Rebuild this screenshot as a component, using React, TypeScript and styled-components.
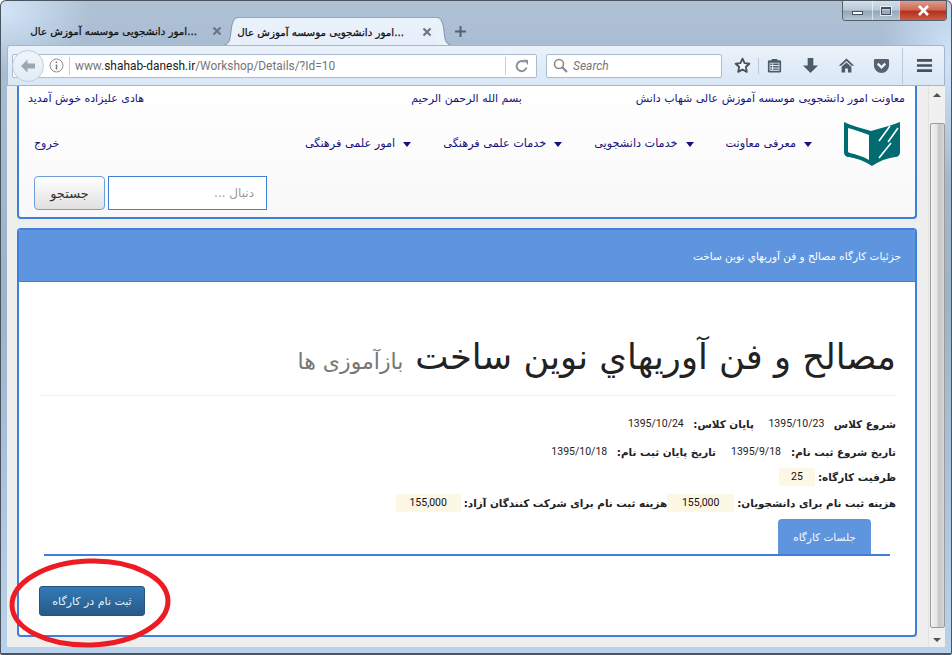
import React from "react";
import styled, { createGlobalStyle } from "styled-components";

const persian = `"DejaVu Sans", "Noto Sans", sans-serif`;
const latin = `Roboto, "Open Sans", "Liberation Sans", sans-serif`;
const blue = "#3f7fd8";
const navy = "#15127c";

const GlobalStyle = createGlobalStyle`
  html, body { margin: 0; padding: 0; width: 952px; height: 655px; overflow: hidden; }
  * { box-sizing: border-box; }
`;

const Frame = styled.div`
  position: relative;
  width: 952px;
  height: 655px;
  display: flex;
  flex-direction: column;
  padding: 0 6px 6px;
  border: 1px solid #4a5562;
  border-radius: 6px 6px 2px 2px;
  border-width: 1px 1px 2px 1px;
  overflow: hidden;
  background:
    radial-gradient(ellipse 90px 60px at 0 10px, #d3e6f8 0%, rgba(211, 230, 248, 0) 100%),
    radial-gradient(ellipse 70px 120px at 100% 60px, #cfe4f8 0%, rgba(207, 228, 248, 0) 100%),
    linear-gradient(180deg, #b0c1d4 0, #a9bdd3 45px, #9db3ca 300px, #b9d2ea 648px);
`;

const WindowControls = styled.div`
  position: absolute;
  top: 0;
  right: 4px;
  display: flex;
  height: 20px;
  border: 1px solid #55606c;
  border-top: none;
  border-radius: 0 0 4px 4px;
  overflow: hidden;
`;

const ControlButton = styled.div<{ $width: number; $close?: boolean }>`
  width: ${(p) => p.$width}px;
  display: flex;
  align-items: center;
  justify-content: center;
  border-left: 1px solid rgba(255, 255, 255, 0.6);
  background: ${(p) =>
    p.$close
      ? "linear-gradient(180deg, #dc9c8e 0, #cf6a56 45%, #b7301c 55%, #cc5c44 100%)"
      : "linear-gradient(180deg, #d5e0ea 0, #b9c9d9 45%, #93a7ba 55%, #b3c5d6 100%)"};
  &:first-child { border-left: none; }
`;

const MinimizeGlyph = styled.span`
  width: 11px;
  height: 4px;
  margin-top: 4px;
  background: #fff;
  border: 1px solid #44505c;
`;

const MaximizeGlyph = styled.span`
  width: 10px;
  height: 8px;
  border: 1px solid #44505c;
  border-top-width: 2px;
  outline: 1px solid rgba(255, 255, 255, 0.7);
`;

const TabStrip = styled.div`
  height: 44px;
  flex: none;
  display: flex;
  align-items: flex-end;
  padding-left: 17px;
`;

const InactiveTab = styled.div`
  width: 203px;
  height: 28px;
  display: flex;
  align-items: center;
  padding: 0 5px 0 7px;
  gap: 15px;
`;

const ActiveTabBody = styled.div`
  height: 28px;
  width: 199px;
  display: flex;
  align-items: center;
  padding-left: 3px;
  gap: 18px;
  border-top: 1px solid #93a6ba;
  background: linear-gradient(180deg, #eaf2fb, #e6effa);
`;

const ActiveTab = styled.div`
  display: flex;
  align-items: flex-end;
  margin-left: -3px;
`;

const TabCurve = styled.svg<{ $flip?: boolean }>`
  display: block;
  width: 14px;
  height: 28px;
  flex: none;
  ${(p) => p.$flip && "transform: scaleX(-1);"}
`;

const TabTitle = styled.span<{ $width: number }>`
  width: ${(p) => p.$width}px;
  flex: none;
  font: 10.3px/14px ${persian};
  color: #111;
  direction: rtl;
  white-space: nowrap;
  -webkit-text-stroke: 0.25px #111;
`;

const TabClose = styled.svg`
  width: 10px;
  height: 10px;
  flex: none;
`;

const NewTab = styled.svg`
  width: 11px;
  height: 11px;
  margin: 0 0 8px 4px;
`;

const Toolbar = styled.div`
  height: 41px;
  flex: none;
  display: flex;
  align-items: center;
  padding-left: 4px;
  border: 1px solid #a3b6ca;
  border-radius: 3px 3px 0 0;
  background: linear-gradient(180deg, #ebf2fa, #d9e7f6);
`;

const UrlBar = styled.div`
  width: 525px;
  height: 24px;
  flex: none;
  display: flex;
  align-items: center;
  background: #fff;
  border: 1px solid #a9bcd2;
  border-radius: 2px;
`;

const BackButton = styled.div`
  width: 32px;
  height: 32px;
  margin-left: -1px;
  flex: none;
  border-radius: 50%;
  display: flex;
  align-items: center;
  justify-content: center;
  background: linear-gradient(180deg, #f0f5fb, #e2ebf5);
  border: 1px solid #c3d0de;
`;

const UrlIcon = styled.svg`
  width: 15px;
  height: 15px;
  margin-left: 5px;
  flex: none;
`;

const UrlDivider = styled.span`
  width: 1px;
  height: 18px;
  margin-left: 5px;
  background: #c9ced4;
  flex: none;
`;

const UrlText = styled.span`
  margin-left: 5px;
  font: 11.9px/20px ${latin};
  color: #757575;
  white-space: nowrap;
  flex: 1;
`;

const UrlHost = styled.span`
  color: #1b1b1b;
`;

const ReloadIcon = styled.svg`
  width: 14px;
  height: 14px;
  margin: 0 7px 0 9px;
  flex: none;
`;

const SearchBox = styled.div`
  width: 176px;
  height: 24px;
  margin: 0 5px 0 9px;
  flex: none;
  display: flex;
  align-items: center;
  gap: 5px;
  padding-left: 6px;
  background: #fff;
  border: 1px solid #a9bcd2;
  border-radius: 2px;
  font: italic 12px/16px ${latin};
  color: #777;
`;

const ToolSlot = styled.div<{ $width: number }>`
  width: ${(p) => p.$width}px;
  flex: none;
  display: flex;
  align-items: center;
  justify-content: center;
`;

const ToolSeparator = styled.span<{ $tall?: boolean }>`
  width: 1px;
  height: ${(p) => (p.$tall ? 36 : 16)}px;
  flex: none;
  background: #bccbdb;
`;

const ToolIcon = styled.svg`
  width: 17px;
  height: 17px;
  display: block;
`;

const Content = styled.div`
  flex: 1;
  min-height: 0;
  display: flex;
`;

const Page = styled.main`
  flex: 1;
  min-width: 0;
  background: #eee;
  padding: 0 11px 0 10px;
  direction: rtl;
  font: 11px/16px ${persian};
`;

const Scrollbar = styled.div`
  width: 17px;
  flex: none;
  display: flex;
  flex-direction: column;
  align-items: center;
  background: #f0f0f0;
  border-left: 1px solid #e2e2e2;
`;

const ScrollArrow = styled.div<{ $down?: boolean }>`
  height: ${(p) => (p.$down ? 19 : 37)}px;
  flex: none;
  width: 100%;
  display: flex;
  align-items: ${(p) => (p.$down ? "flex-end" : "flex-start")};
  justify-content: center;
  padding: ${(p) => (p.$down ? "0 0 5px" : "7px 0 0")};
  &::before {
    content: "";
    border-left: 4px solid transparent;
    border-right: 4px solid transparent;
    ${(p) => (p.$down ? "border-top: 4px solid #505050;" : "border-bottom: 4px solid #505050;")}
  }
`;

const ScrollThumb = styled.div`
  flex: 1;
  width: 15px;
  border: 1px solid #9a9a9a;
  border-radius: 2px;
  background: linear-gradient(90deg, #f2f2f2 0, #e4e4e4 45%, #c6c6c6 60%, #d6d6d6 100%);
`;

const HeaderCard = styled.header`
  height: 133px;
  display: flex;
  flex-direction: column;
  padding: 5px 0 0;
  border: 2px solid ${blue};
  border-top: none;
  border-radius: 0 0 4px 4px;
  background: linear-gradient(180deg, #fff 0, #f8f8f8 100%);
  color: ${navy};
`;

const TopLine = styled.div`
  display: grid;
  grid-template-columns: 1fr auto 1fr;
  padding: 0 10px 0 9px;
  height: 16px;
`;

const LeftCell = styled.div`
  text-align: left;
`;

const NavRow = styled.nav`
  display: flex;
  align-items: center;
  gap: 32px;
  height: 44px;
  margin-top: 15px;
  padding: 0 15px 0 15px;
`;

const Logo = styled.svg`
  width: 56px;
  height: 44px;
  flex: none;
`;

const NavItem = styled.a`
  display: flex;
  align-items: center;
  gap: 8px;
  font-size: 11.25px;
  white-space: nowrap;
  &::before {
    content: "";
    border-left: 4px solid transparent;
    border-right: 4px solid transparent;
    border-top: 5px solid ${navy};
  }
`;

const ExitLink = styled.a`
  margin-right: auto;
`;

const SearchRow = styled.form`
  display: flex;
  justify-content: flex-end;
  gap: 3px;
  margin-top: 10px;
  padding-left: 15px;
`;

const SearchInput = styled.div`
  width: 159px;
  height: 34px;
  display: flex;
  align-items: center;
  padding: 0 12px;
  border: 1px solid ${blue};
  background: #fff;
  color: #999;
  font-size: 12px;
`;

const SearchButton = styled.button`
  width: 71px;
  height: 34px;
  border: 1px solid #6f9fd8;
  border-radius: 4px;
  background: linear-gradient(180deg, #fff 0, #e0e0e0 100%);
  color: #333;
  font: 13px ${persian};
  padding: 0;
`;

const Panel = styled.section`
  height: 409px;
  margin-top: 9px;
  border: 2px solid ${blue};
  border-radius: 4px;
  background: #fff;
  overflow: hidden;
`;

const PanelHeading = styled.div`
  height: 52px;
  display: flex;
  align-items: center;
  padding-right: 14px;
  background: #5f95de;
  color: #fff;
  font-size: 10.5px;
  border-bottom: 1px solid ${blue};
`;

const PanelBody = styled.div`
  padding: 0 19px 0 20px;
`;

const PageTitle = styled.h1`
  margin: 45px 0 14px;
  height: 69px;
  display: flex;
  align-items: baseline;
  gap: 12px;
  padding: 7px 0 0;
  border-bottom: 1px solid #eee;
  font: 400 35.3px/46px ${persian};
  color: #222;
  white-space: nowrap;
`;

const TitleNote = styled.small`
  font-size: 22px;
  font-weight: 400;
  color: #777;
`;

const InfoList = styled.dl`
  margin: 0;
`;

const InfoRow = styled.div<{ $height: number }>`
  height: ${(p) => p.$height}px;
  display: flex;
  align-items: center;
  color: #222;
`;

const InfoLabel = styled.dt`
  font-weight: 700;
  font-size: 10.4px;
  white-space: nowrap;
`;

const InfoValue = styled.dd<{ $width: number; $marked?: boolean }>`
  width: ${(p) => p.$width}px;
  height: 18px;
  margin: 0 10px 0 15px;
  flex: none;
  display: flex;
  align-items: center;
  justify-content: center;
  font: 10.5px/18px ${latin};
  color: #222;
  direction: ltr;
  ${(p) => p.$marked && "background: #fdf7e6; margin: 0 3px 0 0; color: #111;"}
`;

const TabBar = styled.div`
  margin: 1px 6px 0 5px;
  height: 37px;
  border-bottom: 2px solid ${blue};
  padding-right: 19px;
  display: flex;
`;

const SessionTab = styled.div`
  width: 93px;
  height: 35px;
  display: flex;
  align-items: center;
  justify-content: center;
  background: #5f95de;
  border-radius: 4px 4px 0 0;
  color: #f4f8ff;
  font-size: 10.5px;
`;

const RegisterRow = styled.div`
  display: flex;
  justify-content: flex-end;
  margin-top: 30px;
`;

const RegisterButton = styled.button`
  width: 106px;
  height: 30px;
  padding: 0;
  border: 1px solid #245580;
  border-radius: 3px;
  background: linear-gradient(180deg, #337ab7 0, #265a88 100%);
  color: #e8f2fb;
  font: 11px ${persian};
`;

const Highlight = styled.svg`
  position: absolute;
  left: -1px;
  top: -1px;
  width: 952px;
  height: 655px;
  pointer-events: none;
`;

function CloseGlyph() {
  return (
    <TabClose viewBox="0 0 10 10">
      <path d="M1.5 1.5l7 7M8.5 1.5l-7 7" stroke="#6d7580" strokeWidth="2.2" />
    </TabClose>
  );
}

function Curve({ flip }: { flip?: boolean }) {
  return (
    <TabCurve viewBox="0 0 14 28" $flip={flip}>
      <path d="M0 28C6 27 6 22 7 14C8 5 10 1 14 .5V28Z" fill="#e9f1fa" />
      <path d="M0 28C6 27 6 22 7 14C8 5 10 1 14 .5" fill="none" stroke="#7f93a8" />
    </TabCurve>
  );
}

export default function App() {
  const tabTitle = "...امور دانشجویی موسسه آموزش عال";
  return (
    <>
      <GlobalStyle />
      <Frame>
        <WindowControls>
          <ControlButton $width={29}>
            <MinimizeGlyph />
          </ControlButton>
          <ControlButton $width={27}>
            <MaximizeGlyph />
          </ControlButton>
          <ControlButton $width={47} $close>
            <svg width="13" height="11" viewBox="0 0 13 11">
              <path d="M2 1l9 9M11 1l-9 9" stroke="#fff" strokeWidth="2.6" />
            </svg>
          </ControlButton>
        </WindowControls>

        <TabStrip>
          <InactiveTab>
            <TabTitle $width={166}>{tabTitle}</TabTitle>
            <CloseGlyph />
          </InactiveTab>
          <ActiveTab>
            <Curve />
            <ActiveTabBody>
              <TabTitle $width={163}>{tabTitle}</TabTitle>
              <CloseGlyph />
            </ActiveTabBody>
            <Curve flip />
          </ActiveTab>
          <NewTab viewBox="0 0 11 11">
            <path d="M5.5 0v11M0 5.5h11" stroke="#55626f" strokeWidth="2" />
          </NewTab>
        </TabStrip>

        <Toolbar>
          <UrlBar>
            <BackButton>
              <svg width="16" height="14" viewBox="0 0 16 14">
                <path d="M7.5 0.5L1 7l6.5 6.5V9.5H15v-5H7.5z" fill="#9aa6b2" />
              </svg>
            </BackButton>
            <UrlIcon viewBox="0 0 15 15">
              <circle cx="7.5" cy="7.5" r="6.5" fill="none" stroke="#8d8d8d" />
              <path d="M7.5 3.5v1.6M7.5 6.5V11.5" stroke="#777" strokeWidth="1.5" />
            </UrlIcon>
            <UrlDivider />
            <UrlText>
              www.<UrlHost>shahab-danesh.ir</UrlHost>/Workshop/Details/?Id=10
            </UrlText>
            <UrlDivider />
            <ReloadIcon viewBox="0 0 14 14">
              <path d="M11.5 8.5A5 5 0 1 1 9.5 3" fill="none" stroke="#8a949e" strokeWidth="2" />
              <path d="M8 0.5L13 1v5z" fill="#8a949e" />
            </ReloadIcon>
          </UrlBar>
          <SearchBox>
            <svg width="15" height="15" viewBox="0 0 15 15">
              <circle cx="6" cy="6" r="4.5" fill="none" stroke="#8a8a8a" strokeWidth="1.6" />
              <path d="M9.5 9.5L14 14" stroke="#8a8a8a" strokeWidth="2.2" />
            </svg>
            Search
          </SearchBox>
          <ToolSlot $width={31}>
            <ToolIcon viewBox="0 0 18 18">
              <path d="M9 1.8l2.2 4.7 5 .6-3.7 3.5 1 5.1L9 13.2l-4.5 2.5 1-5.1L1.8 7.1l5-.6z" fill="#f7fafd" stroke="#46535f" strokeWidth="2" strokeLinejoin="round" />
            </ToolIcon>
          </ToolSlot>
          <ToolSeparator />
          <ToolSlot $width={30}>
            <ToolIcon viewBox="0 0 18 18">
              <path d="M6 3.5V2h6v1.5h2.5a1.5 1.5 0 0 1 1.5 1.5v10a1.5 1.5 0 0 1-1.5 1.5h-11A1.5 1.5 0 0 1 2 15V5a1.5 1.5 0 0 1 1.5-1.5z" fill="#4d5b68" />
              <path d="M3.8 6h10.4v8.6H3.8z" fill="#e6eff8" />
              <path d="M4.5 7.7h9M4.5 10.3h9M4.5 12.9h9" stroke="#4d5b68" strokeWidth="1.4" />
              <path d="M7 6.5v7.5" stroke="#e6eff8" strokeWidth="1" />
            </ToolIcon>
          </ToolSlot>
          <ToolSlot $width={42}>
            <ToolIcon viewBox="0 0 18 18">
              <path d="M6 1h6v8h5l-8 8-8-8h5z" fill="#4d5b68" />
            </ToolIcon>
          </ToolSlot>
          <ToolSlot $width={30}>
            <ToolIcon viewBox="0 0 18 18">
              <path d="M9 1.5L.8 9.2h2.7L9 4.2l5.5 5h2.7z" fill="#4d5b68" />
              <path d="M9 5.8L3.8 10.4v6.1h3.7v-4.3h3v4.3h3.7v-6.1z" fill="#4d5b68" />
            </ToolIcon>
          </ToolSlot>
          <ToolSlot $width={41}>
            <ToolIcon viewBox="0 0 18 18">
              <path d="M2.5 2h13A1.5 1.5 0 0 1 17 3.5V9a8 8 0 0 1-16 0V3.5A1.5 1.5 0 0 1 2.5 2z" fill="#56636f" />
              <path d="M5 7l4 4 4-4" fill="none" stroke="#eef4fa" strokeWidth="2.4" />
            </ToolIcon>
          </ToolSlot>
          <ToolSeparator $tall />
          <ToolSlot $width={42}>
            <ToolIcon viewBox="0 0 18 18">
              <path d="M1 3.5h16M1 9h16M1 14.5h16" stroke="#45525e" strokeWidth="2.8" />
            </ToolIcon>
          </ToolSlot>
        </Toolbar>

        <Content>
          <Page>
            <HeaderCard>
              <TopLine>
                <div>معاونت امور دانشجویی موسسه آموزش عالی شهاب دانش</div>
                <div>بسم الله الرحمن الرحیم</div>
                <LeftCell>هادی علیزاده خوش آمدید</LeftCell>
              </TopLine>
              <NavRow>
                <Logo viewBox="0 0 56 44">
                  <path d="M0 0C8 4 18 6 27 9C36 6 46 4 56 0V30C56 33 54 35 51 35C43 36 35 39 28 44C21 39 12 36 5 35C2 35 0 33 0 30Z" fill="#006b70" />
                  <path d="M4 6C11 8 18 10 25 13V38C18 34 11 32 6 31C5 31 4 30 4 29Z" fill="#fff" />
                  <path d="M46 4L35 19M54 6L44 20M47 21L35 36" stroke="#fff" strokeWidth="1.6" />
                </Logo>
                <NavItem>معرفی معاونت</NavItem>
                <NavItem>خدمات دانشجویی</NavItem>
                <NavItem>خدمات علمی فرهنگی</NavItem>
                <NavItem>امور علمی فرهنگی</NavItem>
                <ExitLink>خروج</ExitLink>
              </NavRow>
              <SearchRow>
                <SearchInput>دنبال ...</SearchInput>
                <SearchButton type="button">جستجو</SearchButton>
              </SearchRow>
            </HeaderCard>

            <Panel>
              <PanelHeading>جزئیات کارگاه مصالح و فن آوریهاي نوین ساخت</PanelHeading>
              <PanelBody>
                <PageTitle>
                  مصالح و فن آوریهاي نوین ساخت
                  <TitleNote>بازآموزی ها</TitleNote>
                </PageTitle>
                <InfoList>
                  <InfoRow $height={28}>
                    <InfoLabel>شروع کلاس</InfoLabel>
                    <InfoValue $width={55}>1395/10/23</InfoValue>
                    <InfoLabel>پایان کلاس:</InfoLabel>
                    <InfoValue $width={55}>1395/10/24</InfoValue>
                  </InfoRow>
                  <InfoRow $height={28}>
                    <InfoLabel>تاریخ شروع ثبت نام:</InfoLabel>
                    <InfoValue $width={50}>1395/9/18</InfoValue>
                    <InfoLabel>تاریخ پایان ثبت نام:</InfoLabel>
                    <InfoValue $width={55}>1395/10/18</InfoValue>
                  </InfoRow>
                  <InfoRow $height={22}>
                    <InfoLabel>ظرفیت کارگاه:</InfoLabel>
                    <InfoValue $width={36} $marked>25</InfoValue>
                  </InfoRow>
                  <InfoRow $height={30}>
                    <InfoLabel>هزینه ثبت نام برای دانشجویان:</InfoLabel>
                    <InfoValue $width={67} $marked>155,000</InfoValue>
                    <InfoLabel>هزینه ثبت نام برای شرکت کنندگان آزاد:</InfoLabel>
                    <InfoValue $width={65} $marked>155,000</InfoValue>
                  </InfoRow>
                </InfoList>
                <TabBar>
                  <SessionTab>جلسات کارگاه</SessionTab>
                </TabBar>
                <RegisterRow>
                  <RegisterButton type="button">ثبت نام در کارگاه</RegisterButton>
                </RegisterRow>
              </PanelBody>
            </Panel>
          </Page>
          <Scrollbar>
            <ScrollArrow />
            <ScrollThumb />
            <ScrollArrow $down />
          </Scrollbar>
        </Content>

        <Highlight viewBox="0 0 952 655">
          <ellipse cx="90" cy="603" rx="78" ry="42" fill="none" stroke="#ed1c24" strokeWidth="5" transform="rotate(-2 90 603)" />
        </Highlight>
      </Frame>
    </>
  );
}
